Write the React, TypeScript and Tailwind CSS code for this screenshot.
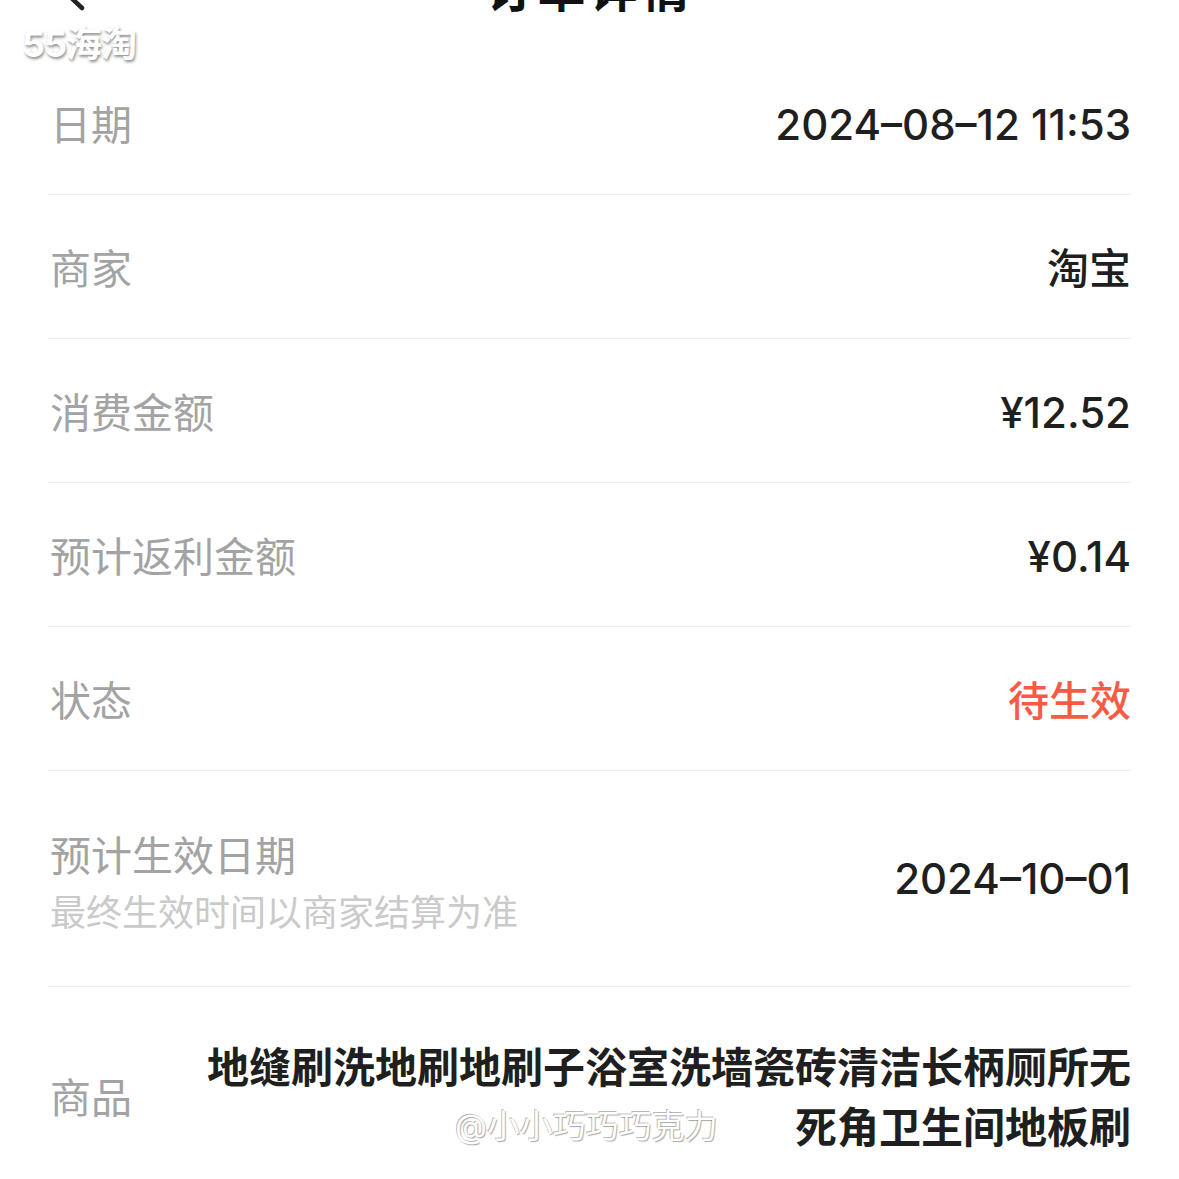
const FONT = "font-['Inter','Noto_Sans_CJK_SC',sans-serif]"

type Row = {
  label: string
  value: string
  red?: boolean
}

const rows: Row[] = [
  { label: "日期", value: "2024–08–12 11:53" },
  { label: "商家", value: "淘宝" },
  { label: "消费金额", value: "¥12.52" },
  { label: "预计返利金额", value: "¥0.14" },
  { label: "状态", value: "待生效", red: true },
]

function Header() {
  return (
    <div className="relative h-[51px] overflow-hidden">
      <svg
        className="absolute left-[50px] top-[-30px]"
        width="40"
        height="50"
        viewBox="0 0 40 50"
        fill="none"
      >
        <polyline
          points="32,4 14,21 32,38"
          stroke="#222"
          strokeWidth="4.5"
          strokeLinecap="round"
          strokeLinejoin="round"
        />
      </svg>
      <div className="mt-[-34px] flex h-[48px] justify-center">
        <span className="text-[48px] leading-[48px] font-bold tracking-[4px] text-[#111]">
          订单详情
        </span>
      </div>
    </div>
  )
}

export default function App() {
  return (
    <div className={`relative min-h-[1179px] w-full bg-white ${FONT}`}>
      <Header />

      <div className="px-[48px]">
        {rows.map((r) => (
          <div
            key={r.label}
            className="flex h-[144px] items-center justify-between border-b border-[#ebebeb] pt-[4px]"
          >
            <span className="pl-[2px] text-[41px] leading-[56px] text-[#a3a3a3]">
              {r.label}
            </span>
            <span
              className={
                r.red
                  ? "text-[41px] leading-[56px] font-medium text-[#f85a45]"
                  : "text-[42px] leading-[56px] font-medium text-[#1f1f1f]"
              }
            >
              {r.value}
            </span>
          </div>
        ))}

        <div className="flex h-[216px] items-center justify-between border-b border-[#ebebeb]">
          <div className="flex flex-col pl-[2px] pt-[8px]">
            <span className="text-[41px] leading-[56px] text-[#a3a3a3]">预计生效日期</span>
            <span className="mt-[4px] text-[36px] leading-[50px] text-[#cacaca]">
              最终生效时间以商家结算为准
            </span>
          </div>
          <span className="text-[42px] leading-[56px] font-medium text-[#1f1f1f]">2024–10–01</span>
        </div>

        <div className="flex items-center py-[51px]">
          <span className="w-[150px] shrink-0 pl-[2px] text-[41px] leading-[56px] text-[#a3a3a3]">
            商品
          </span>
          <p className="flex-1 text-right text-[42px] leading-[60px] font-semibold text-[#1f1f1f]">
            地缝刷洗地刷地刷子浴室洗墙瓷砖清洁长柄厕所无死角卫生间地板刷
          </p>
        </div>
      </div>

      {/* watermarks */}
      <span className="absolute left-[22px] top-[23px] text-[36px] leading-[42px] font-bold tracking-[-1px] text-white [text-shadow:1px_2px_3px_rgba(0,0,0,0.45)]">
        55海淘
      </span>
      <span className="absolute left-[455px] top-[1104px] text-[33px] leading-[44px] text-white [text-shadow:-1px_-1px_0_rgba(0,0,0,0.28),1px_1px_1px_rgba(0,0,0,0.35)]">
        @小小巧巧巧克力
      </span>
    </div>
  )
}
